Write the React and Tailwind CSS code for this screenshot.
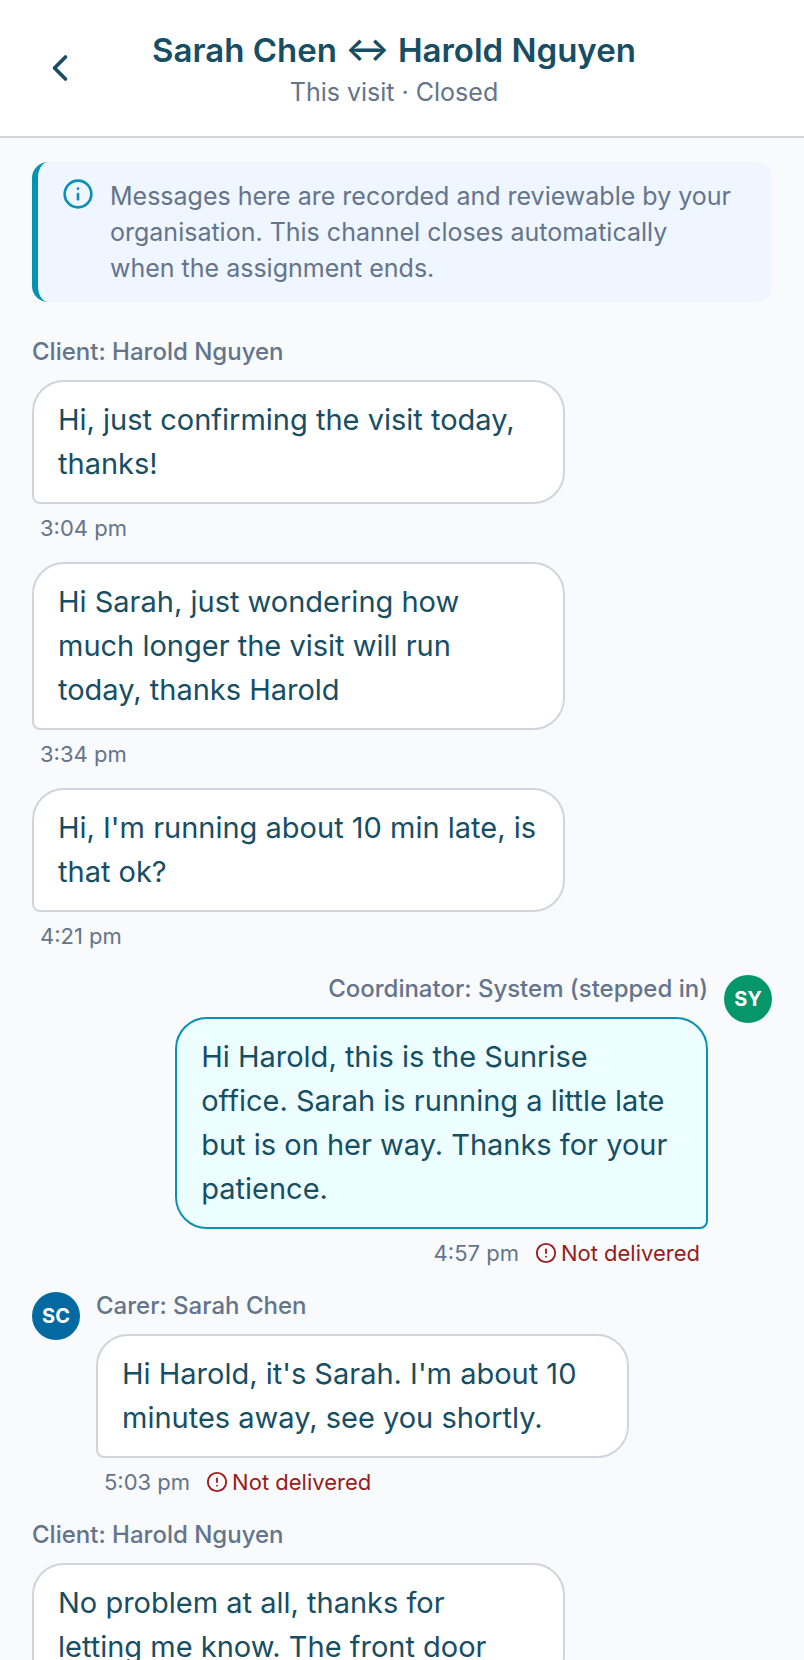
import { ChevronLeft, CircleAlert, Info } from "lucide-react";

const messages = [
  {
    id: 1,
    label: "Client: Harold Nguyen",
    text: "Hi, just confirming the visit today, thanks!",
    time: "3:04 pm",
  },
  {
    id: 2,
    text: "Hi Sarah, just wondering how much longer the visit will run today, thanks Harold",
    time: "3:34 pm",
  },
  {
    id: 3,
    text: "Hi, I'm running about 10 min late, is that ok?",
    time: "4:21 pm",
  },
  {
    id: 4,
    own: true,
    label: "Coordinator: System (stepped in)",
    initials: "SY",
    avatarColor: "bg-[#059669]",
    text: "Hi Harold, this is the Sunrise office. Sarah is running a little late but is on her way. Thanks for your patience.",
    time: "4:57 pm",
    failed: true,
  },
  {
    id: 5,
    label: "Carer: Sarah Chen",
    initials: "SC",
    avatarColor: "bg-[#0369a1]",
    text: "Hi Harold, it's Sarah. I'm about 10 minutes away, see you shortly.",
    time: "5:03 pm",
    failed: true,
  },
  {
    id: 6,
    label: "Client: Harold Nguyen",
    text: "No problem at all, thanks for\nletting me know. The front door",
  },
];

function Avatar({ initials, color }) {
  return (
    <div
      className={`flex h-12 w-12 shrink-0 items-center justify-center rounded-full text-[20px] font-bold text-white ${color}`}
    >
      {initials}
    </div>
  );
}

function Message({ message }) {
  const { own, label, initials, avatarColor, text, time, failed } = message;

  return (
    <li
      className={`flex items-start gap-4 ${own ? "flex-row-reverse" : ""} ${label ? "mt-[23px] first:mt-0" : "mt-[18px]"}`}
    >
      {initials && <Avatar initials={initials} color={avatarColor} />}
      <div className={`flex w-[72%] flex-col ${own ? "items-end" : "items-start"}`}>
        {label && (
          <p className="mb-3.5 text-[24px] leading-7 font-medium whitespace-nowrap text-[#64748b]">
            {label}
          </p>
        )}
        <div
          className={`w-full rounded-[32px] border-2 px-6 py-4 text-[29px] leading-[44px] whitespace-pre-line text-[#164e63] ${
            own
              ? "rounded-br-lg border-[#0891b2] bg-[#ecfeff]"
              : "rounded-bl-lg border-[#d1d5db] bg-white"
          }`}
        >
          {text}
        </div>
        {time && (
          <div className="mt-2 flex items-center gap-4 px-2 text-[22px] leading-8 text-[#64748b]">
            <time>{time}</time>
            {failed && (
              <span className="flex items-center gap-1 text-[#991b1b]">
                <CircleAlert size={22} />
                Not delivered
              </span>
            )}
          </div>
        )}
      </div>
    </li>
  );
}

export default function App() {
  return (
    <div className="h-screen overflow-hidden bg-[#f8fafc] font-['Inter',sans-serif]">
      <header className="flex items-center border-b-2 border-[#d1d5db] bg-white px-4 py-6">
        <button
          type="button"
          aria-label="Back"
          className="flex h-[88px] w-[88px] shrink-0 items-center justify-center text-[#164e63]"
        >
          <ChevronLeft size={44} />
        </button>
        <div className="mr-[104px] flex-1 text-center">
          <h1 className="text-[33px] leading-[48px] font-semibold whitespace-nowrap text-[#164e63]">
            Sarah Chen ↔ Harold Nguyen
          </h1>
          <p className="text-[25px] leading-9 text-[#64748b]">This visit · Closed</p>
        </div>
      </header>

      <main className="px-8 py-6">
        <div className="mb-9 flex items-start gap-4 rounded-2xl border-l-6 border-[#0891b2] bg-[#eff6ff] px-6 py-4">
          <Info size={32} className="shrink-0 text-[#0891b2]" />
          <p className="text-[25px] leading-9 text-[#64748b]">
            Messages here are recorded and reviewable by your organisation. This channel closes
            automatically <br />
            when the assignment ends.
          </p>
        </div>

        <ul>
          {messages.map((message) => (
            <Message key={message.id} message={message} />
          ))}
        </ul>
      </main>
    </div>
  );
}
